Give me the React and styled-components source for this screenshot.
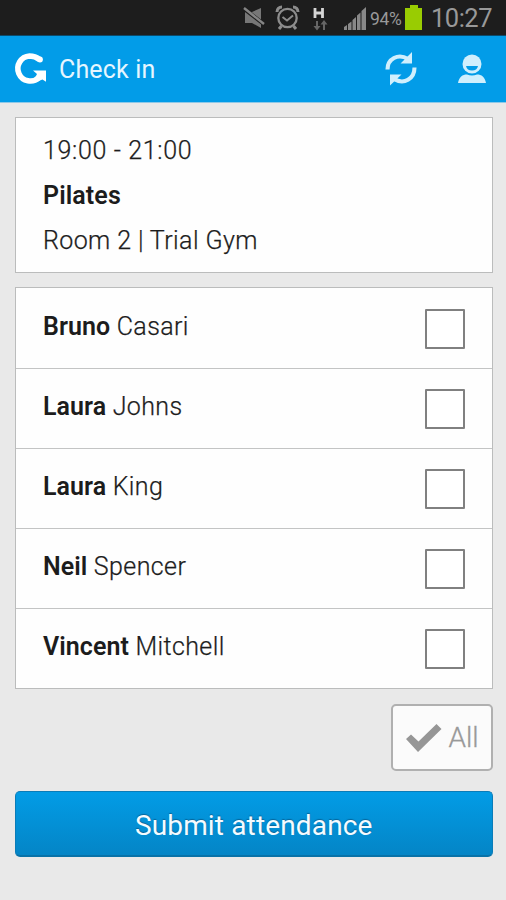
import React, { useState } from 'react';
import styled, { createGlobalStyle } from 'styled-components';

const GlobalStyle = createGlobalStyle`
  * {
    box-sizing: border-box;
  }

  body {
    margin: 0;
    background: #e9e9e9;
    font-family: Roboto, 'Liberation Sans', sans-serif;
    color: #1c1c1c;
  }

  button {
    font-family: inherit;
    padding: 0;
    cursor: pointer;
  }
`;

const Screen = styled.div`
  width: 506px;
  height: 900px;
  overflow: hidden;
  background: #e9e9e9;
`;

const StatusBar = styled.div`
  display: flex;
  height: 36px;
  padding-right: 14px;
  justify-content: flex-end;
  align-items: center;
  background: #1d1d1d;
  border-bottom: 1px solid #0c4a6b;
  color: #999;

  svg {
    display: block;
    flex: none;
  }
`;

const Battery = styled.span`
  margin-left: 1px;
  margin-right: 3px;
  padding-top: 2px;
  font-size: 17.5px;
  letter-spacing: -0.3px;
  width: 32px;
  white-space: nowrap;
`;

const Clock = styled.span`
  margin-left: 6px;
  font-size: 25.5px;
  line-height: 34px;
  letter-spacing: -0.5px;
  width: 63px;
  text-align: right;
`;

const Header = styled.header`
  display: flex;
  height: 67px;
  padding: 0 20px 0 12px;
  align-items: center;
  background: #029ce8;
  border-bottom: 1px solid #8fc9e8;

  svg {
    display: block;
    flex: none;
  }
`;

const Title = styled.h1`
  flex: 1;
  margin: 1px 0 0 13px;
  color: #e6f6ff;
  font-size: 25px;
  font-weight: 400;
  line-height: 30px;
  letter-spacing: 0.15px;
`;

const IconButton = styled.button`
  margin-left: ${props => props.$gap || 0}px;
  border: 0;
  background: none;
  color: #d0effd;
`;

const Content = styled.main`
  display: flex;
  flex-direction: column;
  padding: 14px 13.500px 0 15px;
`;

const Card = styled.section`
  border: 1px solid #bbbcbc;
  background: #fefefe;
`;

const Lesson = styled(Card)`
  height: 156px;
  padding: 10px 27px;
`;

const LessonLine = styled.p`
  margin: 0;
  font-size: 25px;
  font-weight: ${props => (props.$bold ? 600 : 300)};
  line-height: 45px;
  letter-spacing: ${props => props.$spacing || 0}px;
  -webkit-text-stroke: ${props => (props.$bold ? 0 : 0.25)}px #1c1c1c;
`;

const People = styled(Card)`
  height: 402px;
  margin-top: 14px;
`;

const Person = styled.label`
  display: flex;
  height: 80px;
  padding: 0 26.500px 0 27px;
  justify-content: space-between;
  align-items: center;
  border-top: 1px solid transparent;
  font-size: 25px;
  font-weight: 300;
  line-height: 30px;
  letter-spacing: 0.4px;
  -webkit-text-stroke: 0.25px #1c1c1c;

  & + & {
    border-top-color: #c3c4c4;
  }

  b {
    font-weight: 600;
    letter-spacing: 0.05px;
    -webkit-text-stroke: 0;
  }
`;

const Name = styled.span`
  padding-bottom: 4px;
`;

const Checkbox = styled.input`
  appearance: none;
  width: 40px;
  height: 40px;
  margin: 1px 0 0;
  border: 2px solid #808080;
  border-radius: 1px;
  background: #fff;

  &:checked {
    background: #029ce8;
  }
`;

const AllButton = styled.button`
  display: flex;
  width: 102px;
  height: 67px;
  margin-top: 15px;
  padding: 0 12px 0 13px;
  align-self: flex-end;
  justify-content: space-between;
  align-items: center;
  border: 2px solid #b0b0b0;
  border-radius: 5px;
  background: #fbfbfb;
  color: #999;
  font-size: 28px;
  font-weight: 300;
  -webkit-text-stroke: 0.3px #999;
`;

const SubmitButton = styled.button`
  height: 66px;
  margin-top: 20px;
  padding-top: 3px;
  border: 1px solid #0a7cb8;
  border-bottom: 2px solid #0872a8;
  border-radius: 5px;
  background: linear-gradient(#029ce6, #0485c6);
  color: #f4fbff;
  font-size: 28px;
  font-weight: 400;
  letter-spacing: 0.15px;
  text-shadow: 0 -1px 1px #07659a;
`;

const people = [
    ['Bruno', 'Casari'],
    ['Laura', 'Johns'],
    ['Laura', 'King'],
    ['Neil', 'Spencer'],
    ['Vincent', 'Mitchell']
];

const StatusIcons = () => (
    <svg width="126" height="35" viewBox="0 0 126 35">
        {/* muted speaker */}
        <path d="M2 12h7l9-4v20l-9-5H2z" fill="#777" />
        <path d="M0 8l22 17" stroke="#1d1d1d" strokeWidth="4" />
        <path d="M1 8l20 16" stroke="#858585" strokeWidth="2.4" />
        {/* alarm clock */}
        <g fill="none" stroke="#8c8c8c">
            <circle cx="44.5" cy="18" r="9.2" strokeWidth="2.3" />
            <path d="M39.5 17l4.5 3.5 6-5" strokeWidth="2" />
            <path d="M34 12c0-3 2-5 5-5M55 12c0-3-2-5-5-5" strokeWidth="3" />
            <path d="M38.5 26l-2.5 3M50.5 26l2.5 3" strokeWidth="3" />
        </g>
        {/* HSPA data */}
        <path d="M72 8v10M79.5 8v10M72 13h8" stroke="#d5d5d5" strokeWidth="2.8" />
        <path d="M74 21v7M81 30v-7" stroke="#666" strokeWidth="2" />
        <path d="M70.5 26h7L74 30.500zM77.500 24.500h7L81 20z" fill="#666" />
        {/* signal */}
        <path d="M101 30v-3l3-2v5zM105 30v-6l3.500-2.500V30zM109.500 30V20l3.500-3v13zM114 30V15.500l3.500-3V30zM118.500 30V11l4.500-4v23z" fill="#888" />
    </svg>
);

const BatteryIcon = () => (
    <svg width="18" height="35" viewBox="0 0 18 35">
        <path d="M5 5h8v3h4v22H0V8h5z" fill="#99cc02" />
    </svg>
);

const Logo = () => (
    <svg width="34" height="34" viewBox="0 0 34 34">
        <path d="M27.500 7.500C24.500 5 21 4 17.500 4A12.500 12.500 0 1 0 27 25.500" fill="none" stroke="#fff" strokeWidth="5.600" />
        <circle cx="28" cy="7.500" r="2.900" fill="#fff" />
        <path d="M21 18.500h14v12l-4.500-3-4 1.500-3-4 1.500-3z" fill="#fff" />
    </svg>
);

const RefreshIcon = () => (
    <svg width="32" height="34" viewBox="0 0 32 34">
        <g fill="none" stroke="currentColor" strokeWidth="4.100">
            <path d="M2.500 17.500C2.500 7 13 1 23 7" />
            <path d="M29.500 15.500C29.500 27 19 33 9 27" />
        </g>
        <path d="M27 0v11.500H15.500zM5 33.500V22.500h11.500z" fill="currentColor" />
    </svg>
);

const UserIcon = () => (
    <svg width="28" height="30" viewBox="0 0 28 30">
        <circle cx="14" cy="10" r="9.500" fill="currentColor" />
        <path d="M0 29c1-6 4.500-8.500 9-8.500q5 2 10 0c4.500 0 8 2.500 9 8.500z" fill="currentColor" />
        <path d="M8 12h12q-1 4.500-6 4.500t-6-4.500z" fill="#029ce8" />
    </svg>
);

const CheckIcon = () => (
    <svg width="36" height="30" viewBox="0 0 36 30">
        <path d="M0 16l5-4.500 7.500 7L30.500 1l5 5-23.500 23z" fill="#969696" />
    </svg>
);

const App = () => {
    const [checked, setChecked] = useState(people.map(() => false));

    const toggle = index => {
        setChecked(checked.map((value, i) => (i === index ? !value : value)));
    };

    return (
        <Screen>
            <GlobalStyle />
            <StatusBar>
                <StatusIcons />
                <Battery>94%</Battery>
                <BatteryIcon />
                <Clock>10:27</Clock>
            </StatusBar>
            <Header>
                <Logo />
                <Title>Check in</Title>
                <IconButton aria-label="Refresh"><RefreshIcon /></IconButton>
                <IconButton aria-label="Profile" $gap={41}><UserIcon /></IconButton>
            </Header>
            <Content>
                <Lesson>
                    <LessonLine $spacing={0.65}>19:00 - 21:00</LessonLine>
                    <LessonLine $bold $spacing={0.1}>Pilates</LessonLine>
                    <LessonLine $spacing={0.4}>Room 2 | Trial Gym</LessonLine>
                </Lesson>
                <People>
                    {people.map(([first, last], index) => (
                        <Person key={first + last}>
                            <Name><b>{first}</b> {last}</Name>
                            <Checkbox
                                type="checkbox"
                                checked={checked[index]}
                                onChange={() => toggle(index)}
                            />
                        </Person>
                    ))}
                </People>
                <AllButton onClick={() => setChecked(people.map(() => true))}>
                    <CheckIcon />
                    All
                </AllButton>
                <SubmitButton>Submit attendance</SubmitButton>
            </Content>
        </Screen>
    );
};

export default App;
